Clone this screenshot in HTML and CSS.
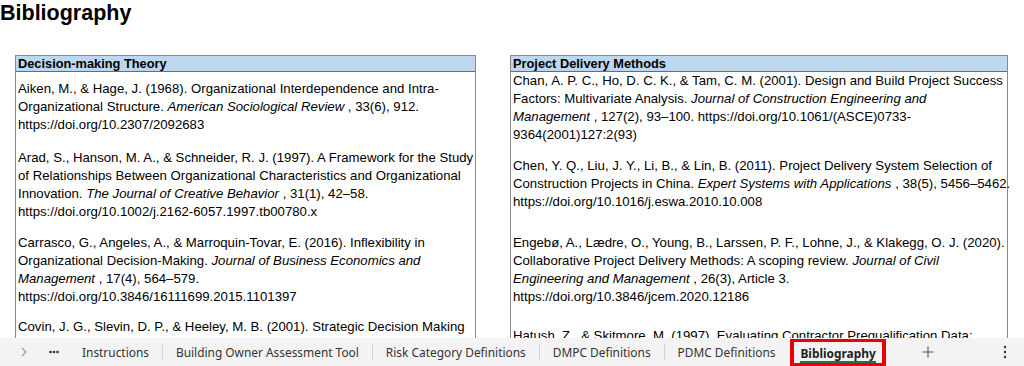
FILE: index.html
```html
<!DOCTYPE html>
<html lang="en">
<head>
<meta charset="utf-8">
<title>Bibliography</title>
<link rel="stylesheet" href="styles.css">
</head>
<body>
<main class="sheet">
  <h1 class="title">Bibliography</h1>
  <div class="columns">
    <section class="box box-left">
      <div class="box-head">Decision-making Theory</div>
      <div class="entry gap-8">Aiken, M., &amp; Hage, J. (1968). Organizational Interdependence and Intra-<br>Organizational Structure. <i>American Sociological Review</i> , 33(6), 912.<br>https://doi.org/10.2307/2092683</div>
      <div class="entry gap-15">Arad, S., Hanson, M. A., &amp; Schneider, R. J. (1997). A Framework for the Study<br>of Relationships Between Organizational Characteristics and Organizational<br>Innovation. <i>The Journal of Creative Behavior</i> , 31(1), 42–58.<br>https://doi.org/10.1002/j.2162-6057.1997.tb00780.x</div>
      <div class="entry gap-13">Carrasco, G., Angeles, A., &amp; Marroquin-Tovar, E. (2016). Inflexibility in<br>Organizational Decision-Making. <i>Journal of Business Economics and<br>Management</i> , 17(4), 564–579.<br>https://doi.org/10.3846/16111699.2015.1101397</div>
      <div class="entry gap-12">Covin, J. G., Slevin, D. P., &amp; Heeley, M. B. (2001). Strategic Decision Making</div>
    </section>
    <section class="box box-right">
      <div class="box-head">Project Delivery Methods</div>
      <div class="entry">Chan, A. P. C., Ho, D. C. K., &amp; Tam, C. M. (2001). Design and Build Project Success<br>Factors: Multivariate Analysis. <i>Journal of Construction Engineering and<br>Management</i> , 127(2), 93–100. https://doi.org/10.1061/(ASCE)0733-<br>9364(2001)127:2(93)</div>
      <div class="entry gap-13">Chen, Y. Q., Liu, J. Y., Li, B., &amp; Lin, B. (2011). Project Delivery System Selection of<br>Construction Projects in China. <i>Expert Systems with Applications</i> , 38(5), 5456–5462.<br>https://doi.org/10.1016/j.eswa.2010.10.008</div>
      <div class="entry gap-23">Engebø, A., Lædre, O., Young, B., Larssen, P. F., Lohne, J., &amp; Klakegg, O. J. (2020).<br>Collaborative Project Delivery Methods: A scoping review. <i>Journal of Civil<br>Engineering and Management</i> , 26(3), Article 3.<br>https://doi.org/10.3846/jcem.2020.12186</div>
      <div class="entry gap-21">Hatush, Z., &amp; Skitmore, M. (1997). Evaluating Contractor Prequalification Data:</div>
    </section>
  </div>
</main>
<nav class="tabbar">
  <span class="tab-icon chevron">
    <svg width="8" height="12" viewBox="0 0 8 12"><path d="M2 2 L6 6 L2 10" fill="none" stroke="#9a9a9a" stroke-width="1.2"/></svg>
  </span>
  <span class="tab-icon more">
    <svg width="10" height="4" viewBox="0 0 10 4"><circle cx="1.5" cy="2" r="1.3" fill="#333"/><circle cx="5" cy="2" r="1.3" fill="#333"/><circle cx="8.5" cy="2" r="1.3" fill="#333"/></svg>
  </span>
  <span class="tab">Instructions</span>
  <span class="sep"></span>
  <span class="tab">Building Owner Assessment Tool</span>
  <span class="sep"></span>
  <span class="tab">Risk Category Definitions</span>
  <span class="sep"></span>
  <span class="tab">DMPC Definitions</span>
  <span class="sep"></span>
  <span class="tab">PDMC Definitions</span>
  <span class="tab tab-active"><span class="tab-label">Bibliography</span></span>
  <span class="tab-icon plus">
    <svg width="12" height="12" viewBox="0 0 12 12"><path d="M6 0.5 V11.5 M0.5 6 H11.5" stroke="#555" stroke-width="1.1"/></svg>
  </span>
  <span class="tab-icon kebab">
    <svg width="4" height="14" viewBox="0 0 4 14"><circle cx="2" cy="2" r="1.2" fill="#333"/><circle cx="2" cy="7" r="1.2" fill="#333"/><circle cx="2" cy="12" r="1.2" fill="#333"/></svg>
  </span>
</nav>
</body>
</html>
```
FILE: styles.css
```css
html, body {
  margin: 0;
  padding: 0;
  background: #ffffff;
}

body {
  width: 1024px;
  height: 366px;
  overflow: hidden;
  font-family: "Liberation Sans", Arial, sans-serif;
  color: #000;
}

.sheet {
  height: 338px;
  overflow: hidden;
}

.title {
  margin: 0;
  font-size: 21.5px;
  line-height: 26px;
  font-weight: bold;
}

.columns {
  display: flex;
  gap: 34px;
  margin-top: 29px;
  padding-left: 15px;
  align-items: flex-start;
}

.box {
  border: 1px solid #8a8a8a;
  box-sizing: border-box;
  height: 320px;
}

.box-left {
  width: 461px;
}

.box-right {
  width: 498px;
}

.box-head {
  background: #bdd7ee;
  border-bottom: 1px solid #6b6b6b;
  font-weight: bold;
  font-size: 12.8px;
  line-height: 15px;
  padding-left: 2px;
}

.entry {
  font-size: 13.2px;
  line-height: 18px;
  padding-left: 2px;
  white-space: nowrap;
}

.gap-8 { margin-top: 8px; }
.gap-12 { margin-top: 12px; }
.gap-13 { margin-top: 13px; }
.gap-15 { margin-top: 15px; }
.gap-21 { margin-top: 21px; }
.gap-23 { margin-top: 23px; }

.tabbar {
  height: 28px;
  background: #f3f3f3;
  display: flex;
  align-items: center;
  font-family: "Noto Sans", "Open Sans", sans-serif;
  font-size: 11.9px;
  color: #333;
}

.tab-icon {
  display: flex;
  align-items: center;
  justify-content: center;
}

.chevron {
  margin-left: 20px;
}

.more {
  margin-left: 21px;
}

.tab {
  padding: 0 13px;
  white-space: nowrap;
}

.more + .tab {
  margin-left: 10px;
}

.sep {
  width: 1px;
  height: 16px;
  background: #d4d4d4;
}

.tab-active {
  align-self: stretch;
  display: flex;
  align-items: center;
  margin-left: 2px;
  padding: 0 6px;
  border: 3px solid #e8000b;
  border-left-width: 4px;
  border-right-width: 4px;
  border-bottom-width: 3px;
  margin-top: 1px;
  box-sizing: border-box;
  font-weight: bold;
  color: #222;
}

.tab-label {
  border-bottom: 2px solid #217346;
  line-height: 16px;
  padding-top: 2px;
}

.plus {
  margin-left: 36px;
}

.kebab {
  margin-left: auto;
  margin-right: 17px;
}
```
